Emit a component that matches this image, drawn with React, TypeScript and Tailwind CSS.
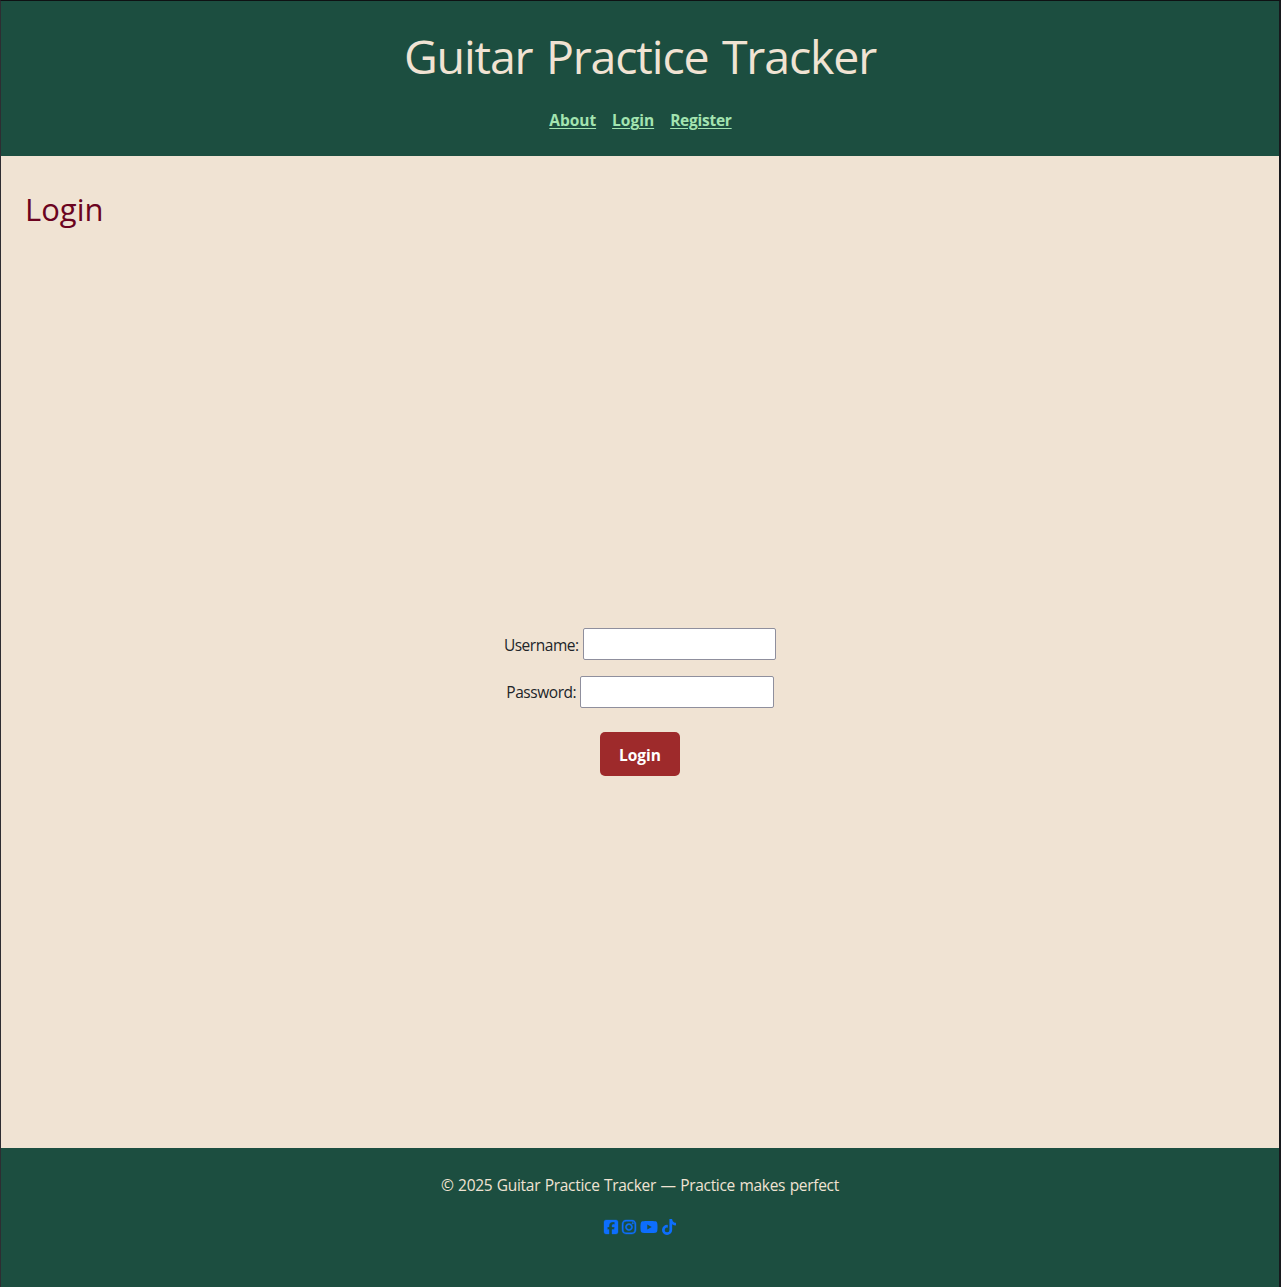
import { FaInstagram, FaSquareFacebook, FaTiktok, FaYoutube } from "react-icons/fa6";

const navLinks = [
  { label: "About", style: "tracking-[-0.05px]" },
  { label: "Login", style: "tracking-[0px]" },
  { label: "Register", style: "tracking-[-0.25px]" },
];

function Field({ label, type, labelStyle }: { label: string; type: string; labelStyle: string }) {
  return (
    <label className="flex items-center gap-1">
      <span className={`text-[15.5px] leading-6 whitespace-nowrap ${labelStyle}`}>{label}</span>
      <input
        type={type}
        className="h-8 w-[193.5px] rounded-[2px] border border-[#8f8f9d] bg-white px-1 outline-none"
      />
    </label>
  );
}

export default function App() {
  return (
    <div className="flex h-[1287px] w-[1281px] flex-col overflow-hidden border-t border-r-2 border-l border-t-[#0e1113] border-r-[#17191d] border-l-[#2e2d32] bg-[#f0e3d3] font-['Open_Sans',sans-serif] text-[#212529]">
      <header className="flex h-[155px] shrink-0 flex-col items-center bg-[#1c4e40] pt-[23px]">
        <h1 className="text-[46.5px] leading-[64px] font-normal tracking-[-1.15px] [word-spacing:2.5px] whitespace-nowrap text-[#f0e3d3]">
          Guitar Practice Tracker
        </h1>
        <nav className="mt-5 flex gap-4 pl-px text-[15.5px] leading-6 font-bold text-[#a3e4b0]">
          {navLinks.map((link) => (
            <a key={link.label} href="#" className={`underline decoration-1 underline-offset-2 ${link.style}`}>
              {link.label}
            </a>
          ))}
        </nav>
      </header>

      <main className="flex flex-1 flex-col px-6 pt-[31px]">
        <h2 className="text-[31px] leading-[44px] font-normal text-[#6b0320]">Login</h2>
        <form className="mt-[397px] flex flex-col items-center">
          <div className="flex flex-col items-center gap-4">
            <Field label="Username:" type="text" labelStyle="pt-0.5 tracking-[-0.47px]" />
            <Field label="Password:" type="password" labelStyle="tracking-[-0.45px]" />
          </div>
          <button
            type="button"
            className="mt-6 h-11 w-20 rounded-[5px] bg-[#9e2a2b] pt-1 text-[15.5px] font-bold text-white"
          >
            Login
          </button>
        </form>
      </main>

      <footer className="flex h-[139px] shrink-0 flex-col items-center bg-[#1c4e40] pt-[25px] text-[#f0e3d3]">
        <p className="text-[15.5px] leading-6 tracking-[-0.3px] [word-spacing:0.75px] whitespace-nowrap">
          © 2025 Guitar Practice Tracker — Practice makes perfect
        </p>
        <div className="mt-[22px] flex gap-1 text-[#0d6efd]">
          <FaSquareFacebook className="h-4 w-3.5 overflow-visible stroke-current stroke-[10]" />
          <FaInstagram className="h-4 w-3.5 overflow-visible stroke-current stroke-[14]" />
          <FaYoutube className="h-4 w-[18px]" />
          <FaTiktok className="h-4 w-3.5" />
        </div>
      </footer>
    </div>
  );
}
